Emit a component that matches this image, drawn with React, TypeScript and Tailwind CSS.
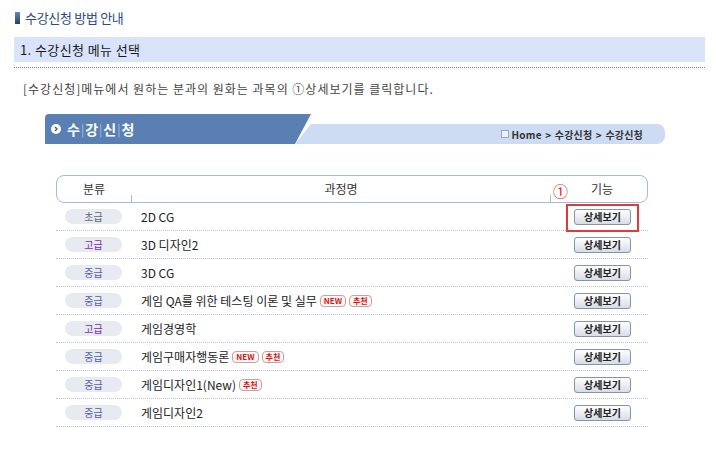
import React from 'react';

// Course rows
const courses = [
  { id: 1, level: '초급', title: '2D CG', tags: [] as string[] },
  { id: 2, level: '고급', title: '3D 디자인2', tags: [] },
  { id: 3, level: '중급', title: '3D CG', tags: [] },
  { id: 4, level: '중급', title: '게임 QA를 위한 테스팅 이론 및 실무', tags: ['NEW', '추천'] },
  { id: 5, level: '고급', title: '게임경영학', tags: [] },
  { id: 6, level: '중급', title: '게임구매자행동론', tags: ['NEW', '추천'] },
  { id: 7, level: '중급', title: '게임디자인1(New)', tags: ['추천'] },
  { id: 8, level: '중급', title: '게임디자인2', tags: [] },
];

const levelColor: Record<string, string> = {
  초급: 'text-[#5a6a7a]',
  중급: 'text-[#5560a8]',
  고급: 'text-[#7a2fa8]',
};

const Tag: React.FC<{ label: string }> = ({ label }) => (
  <span className="ml-[3px] inline-flex h-[12px] items-center rounded-[4px] border border-[#c9a0a0] bg-[#fff5f5] px-[3px] text-[8px] font-bold leading-none text-[#d01818]">
    {label}
  </span>
);

const Sep = () => <span className="mx-px text-[12px] font-normal text-[#a9c0e0]">|</span>;

export default function App() {
  return (
    <div
      className="h-[470px] w-[716px] overflow-hidden bg-white pl-[14px] pr-[11px] pt-[8px] text-[#222]"
      style={{ fontFamily: '"Noto Sans CJK KR", "Liberation Sans", sans-serif' }}
    >
      {/* page title */}
      <div className="flex h-[20px] items-center gap-[5px] pl-[1px]">
        <span className="h-[12px] w-[5px] bg-gradient-to-b from-[#6a86b0] to-[#24406e]"></span>
        <span className="text-[13px] tracking-[-0.3px] text-[#2c4a7e]">수강신청 방법 안내</span>
      </div>

      {/* step band */}
      <div className="mt-[9px] flex h-[25px] items-center bg-[#d9e4fa] pl-[6px] text-[13px] tracking-[0.4px] text-[#1a1a1a]">
        1. 수강신청 메뉴 선택
      </div>
      <div className="mt-[5px] border-t border-dotted border-[#7a7a7a]"></div>

      <p className="mt-[13px] pl-[9px] text-[12px] leading-[16px] tracking-[1px] text-[#444]">
        [수강신청]메뉴에서 원하는 분과의 원화는 과목의 ①상세보기를 클릭합니다.
      </p>

      {/* screenshot panel */}
      <div className="ml-[31px] mt-[17px] w-[620px]">
        <div className="flex h-[30px]">
          <div className="flex w-[266px] flex-none items-center gap-[6px] rounded-tl-[4px] bg-[#5a7fb3] pl-[6px] [clip-path:polygon(0_0,100%_0,calc(100%-16px)_100%,0_100%)]">
            <span className="flex h-[10px] w-[10px] items-center justify-center rounded-full bg-white">
              <svg width="6" height="6" viewBox="0 0 6 6">
                <path d="M2 1 L4 3 L2 5" stroke="#3d5f92" strokeWidth="1.4" fill="none" />
              </svg>
            </span>
            <span className="flex items-center text-[14px] font-bold text-white">
              수<Sep />강<Sep />신<Sep />청
            </span>
          </div>
          <div className="-ml-[16px] flex h-[20px] flex-1 items-center justify-end self-end rounded-r-[8px] bg-[#cddcf2] pr-[22px] [clip-path:polygon(16px_0,100%_0,100%_100%,0_100%)]">
            <span className="mr-[3px] inline-block h-[8px] w-[8px] border border-[#9aa8ba] bg-[#eef2f8]"></span>
            <span className="text-[10px] font-bold tracking-[0.2px] text-[#333]">
              Home <span className="mx-[1px]">&gt;</span> 수강신청 <span className="mx-[1px]">&gt;</span> 수강신청
            </span>
          </div>
        </div>

        {/* course table */}
        <div className="relative ml-[11px] mt-[31px] w-[592px]">
          <div className="relative flex h-[28px] items-center rounded-[8px] border border-[#a4bbde] text-[12px] text-[#333]">
            <div className="w-[74px] text-center">분류</div>
            <div className="relative h-full flex-1">
              <span className="absolute bottom-0 left-0 h-[7px] w-px bg-[#a4bbde]"></span>
              <span className="flex h-full items-center justify-center">과정명</span>
              <span className="absolute bottom-0 right-0 h-[7px] w-px bg-[#a4bbde]"></span>
            </div>
            <div className="w-[96px] pl-[6px] text-center">기능</div>
          </div>

          {/* ① marker */}
          <span className="absolute left-[497px] top-[8px] text-[15px] leading-none text-[#e02020]">①</span>

          {courses.map((c, i) => (
            <div key={c.id} className="relative flex h-[28px] items-center border-b border-dotted border-[#b4c2d6]">
              <div className="w-[74px] pl-[9px]">
                <span className={`flex h-[15px] w-[57px] items-center justify-center rounded-full bg-[#e7ebf1] text-[10px] ${levelColor[c.level]}`}>
                  {c.level}
                </span>
              </div>
              <div className="flex flex-1 items-center pl-[11px] text-[12px] text-[#222]">
                {c.title}
                {c.tags.map((t) => (
                  <Tag key={t} label={t} />
                ))}
              </div>
              <div className="w-[96px] pl-[22px]">
                <button className="flex h-[16px] w-[57px] items-center justify-center rounded-[3px] border border-[#8494aa] bg-gradient-to-b from-white to-[#d6dde7] text-[10px] font-bold text-[#222]">
                  상세보기
                </button>
              </div>
              {i === 0 && (
                <span className="absolute left-[510px] top-[1px] h-[28px] w-[73px] border-2 border-[#e03a3a]"></span>
              )}
            </div>
          ))}
        </div>
      </div>
    </div>
  );
}
